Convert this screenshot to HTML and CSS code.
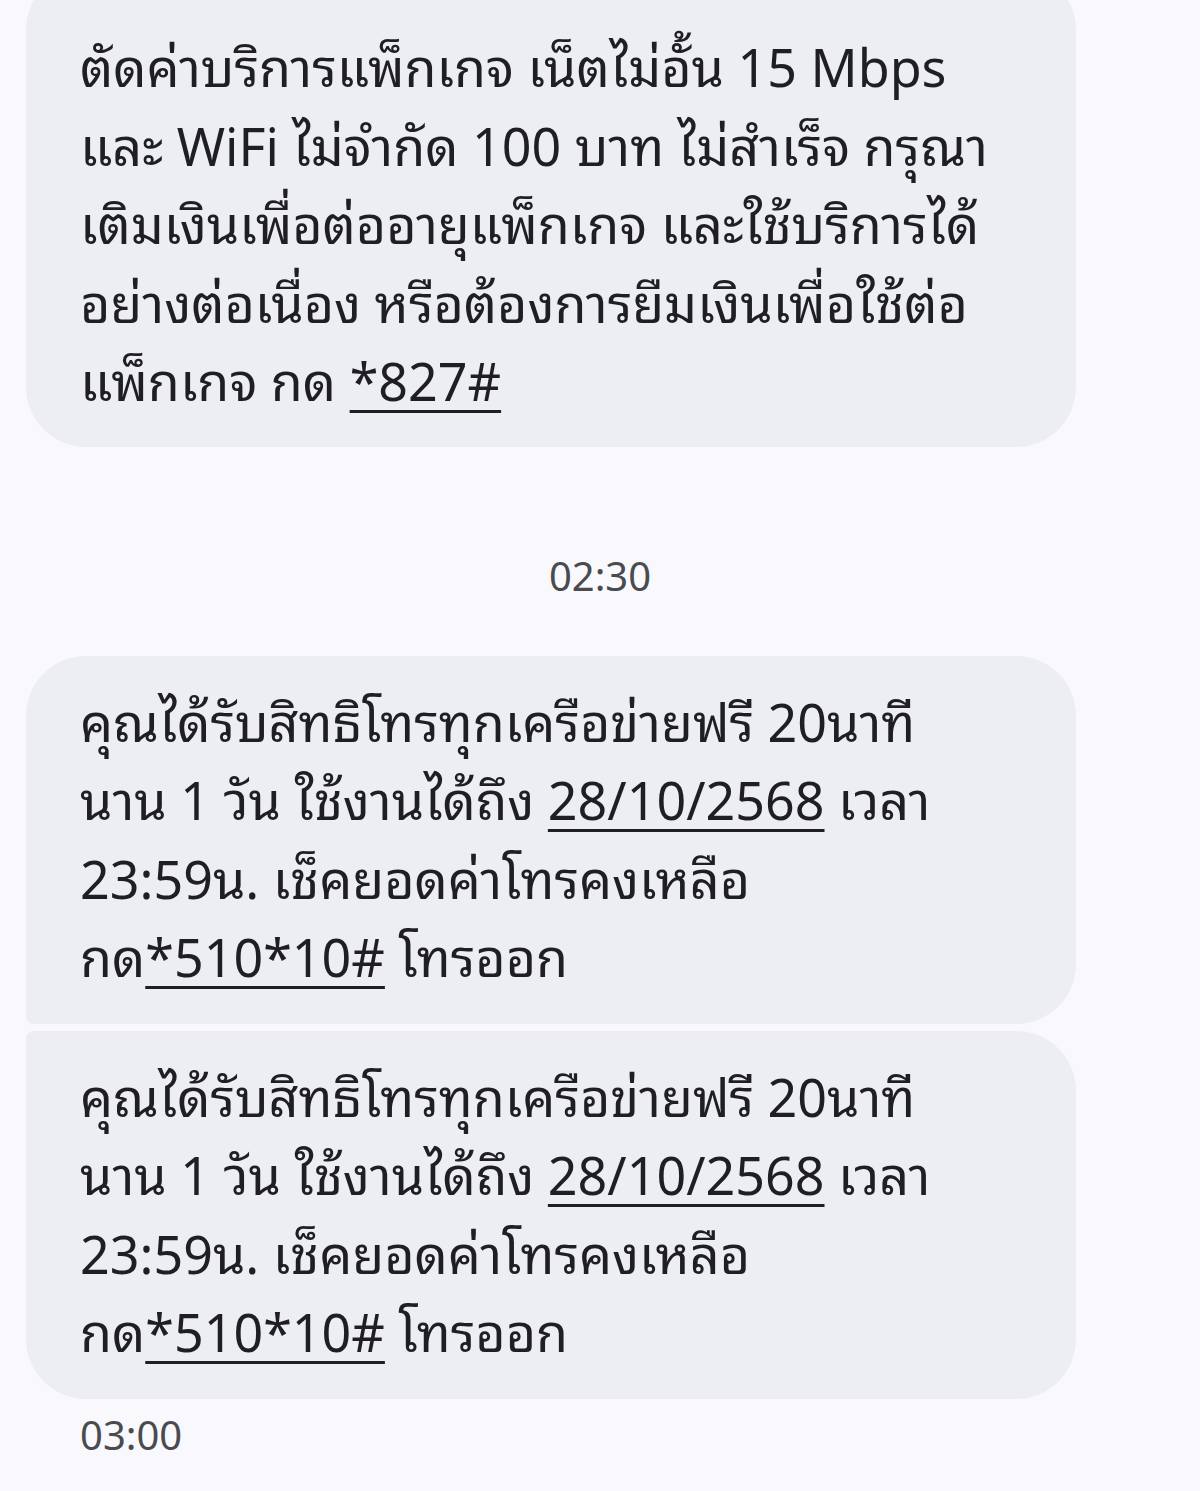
FILE: index.html
```html
<!DOCTYPE html>
<html lang="th">
<head>
<meta charset="utf-8">
<link rel="stylesheet" href="styles.css">
</head>
<body>
<div class="thread">
  <div class="bubble first">ตัดค่าบริการแพ็กเกจ เน็ตไม่อั้น 15 Mbps<br>และ WiFi ไม่จำกัด 100 บาท ไม่สำเร็จ กรุณา<br>เติมเงินเพื่อต่ออายุแพ็กเกจ และใช้บริการได้<br>อย่างต่อเนื่อง หรือต้องการยืมเงินเพื่อใช้ต่อ<br>แพ็กเกจ กด <span class="link">*827#</span></div>
  <div class="stamp center">02:30</div>
  <div class="group">
    <div class="bubble top">คุณได้รับสิทธิโทรทุกเครือข่ายฟรี 20นาที<br>นาน 1 วัน ใช้งานได้ถึง <span class="link">28/10/2568</span> เวลา<br>23:59น. เช็คยอดค่าโทรคงเหลือ<br>กด<span class="link">*510*10#</span> โทรออก</div>
    <div class="bubble bottom">คุณได้รับสิทธิโทรทุกเครือข่ายฟรี 20นาที<br>นาน 1 วัน ใช้งานได้ถึง <span class="link">28/10/2568</span> เวลา<br>23:59น. เช็คยอดค่าโทรคงเหลือ<br>กด<span class="link">*510*10#</span> โทรออก</div>
  </div>
  <div class="stamp">03:00</div>
</div>
</body>
</html>
```
FILE: styles.css
```css
html, body {
  margin: 0;
  padding: 0;
  background: #f9f9fd;
}
body {
  font-family: "Noto Sans Thai Looped", "Noto Sans", "Noto Sans Thai", sans-serif;
  color: #1f1f23;
  overflow: hidden;
  height: 1491px;
}
.thread {
  display: flex;
  flex-direction: column;
  padding: 0 124px 0 26px;
}
.bubble {
  background: #edeef2;
  border-radius: 60px;
  padding: 24px 0 30px 54px;
  font-size: 52px;
  line-height: 78.5px;
  white-space: nowrap;
}
.bubble.first {
  margin-top: -30px;
  padding-top: 55px;
  padding-bottom: 29px;
}
.group {
  display: flex;
  flex-direction: column;
  gap: 7px;
}
.bubble.top {
  border-bottom-left-radius: 8px;
}
.bubble.bottom {
  border-top-left-radius: 8px;
}
.link {
  text-decoration: underline;
  text-decoration-thickness: 3px;
  text-underline-offset: 9px;
}
.stamp {
  font-size: 40px;
  line-height: 46px;
  color: #4a4b50;
  padding-left: 54px;
  margin-top: 10px;
}
.stamp.center {
  text-align: center;
  padding-left: 98px;
  margin-top: 103px;
  margin-bottom: 60px;
}
```
